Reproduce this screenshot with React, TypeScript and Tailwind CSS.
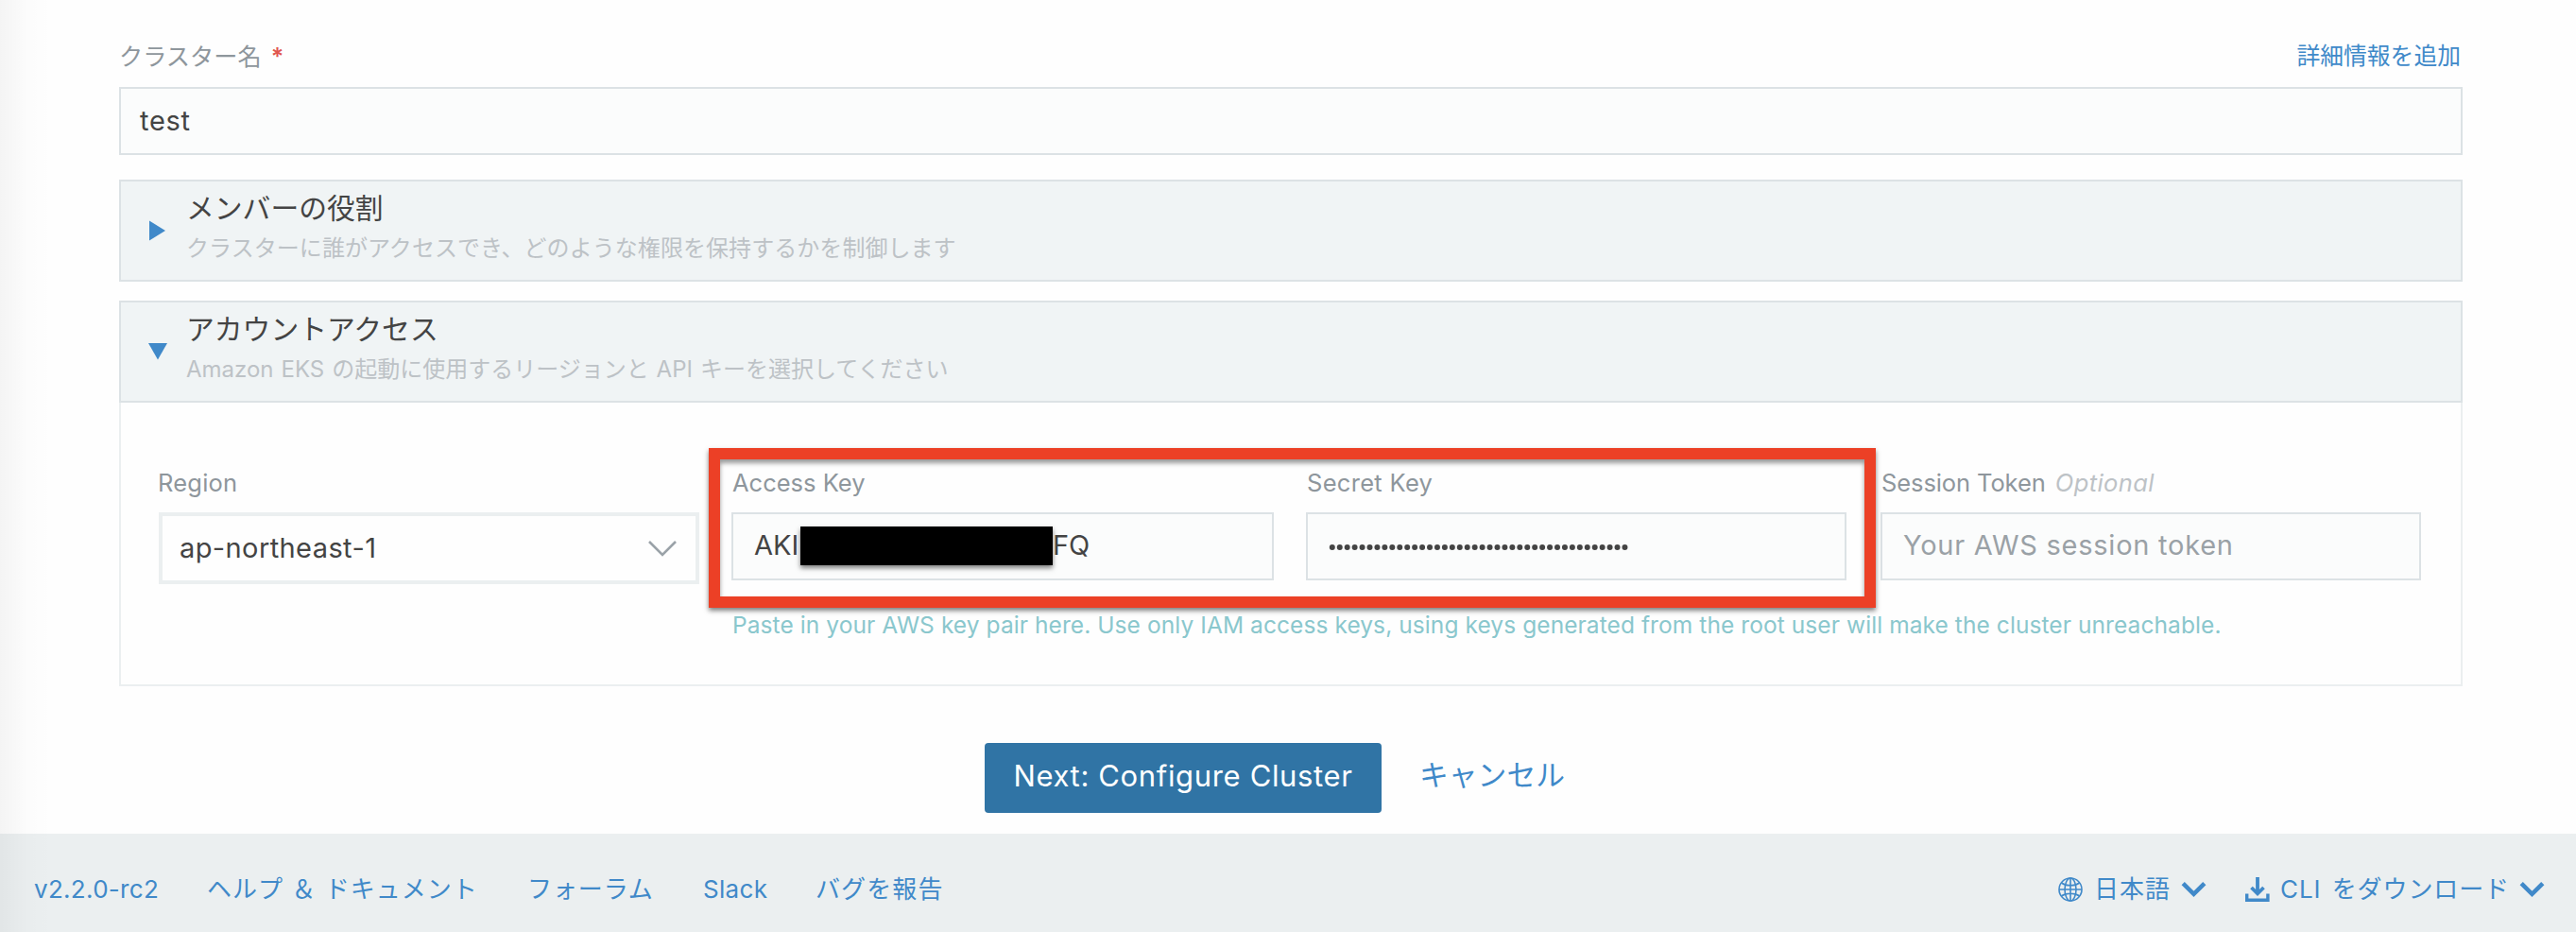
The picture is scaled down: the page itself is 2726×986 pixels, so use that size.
import type { ReactNode } from "react";

function Panel({ open, title, detail, children }: { open?: boolean; title: string; detail: ReactNode; children?: ReactNode }) {
  return (
    <section>
      <header className="flex h-[108px] border-2 border-[#dce2e5] bg-[#f0f4f5] pl-[28px]">
        <div className="w-[41px] shrink-0 pt-[41px]">
          {open ? (
            <svg className="mt-[2px] block h-[18px] w-[22px] fill-[#4089c9]" viewBox="0 0 22 18">
              <path d="M1 0H21L11 17.5Z" />
            </svg>
          ) : (
            <svg className="block h-[22px] w-[22px] fill-[#4089c9]" viewBox="0 0 22 22">
              <path d="M2 0.5V21.5L19 11Z" />
            </svg>
          )}
        </div>
        <div className="pt-[8px]">
          <h2 className="h-[40px] text-[29.8px] leading-[40px] text-[#444444]">{title}</h2>
          <p className="mt-[5px] text-[24px] leading-[36px] text-[#bdc2c6]">{detail}</p>
        </div>
      </header>
      {children}
    </section>
  );
}

function Field({ label, className, children }: { label: ReactNode; className: string; children: ReactNode }) {
  return (
    <div className={className}>
      <label className="block h-[52px] pl-[1px] text-[25.5px] leading-[41px] text-[#8e969c]">{label}</label>
      {children}
    </div>
  );
}

function Chevron() {
  return (
    <svg className="h-[18px] w-[27px]" viewBox="0 0 27 18" fill="none" stroke="#4089c9" strokeWidth="4.6">
      <path d="M2.2 2.7L13.5 13.8L24.8 2.7" />
    </svg>
  );
}

const inputBox = "flex h-[72px] items-center border-2 border-[#dce2e5] bg-[#fbfcfc] pl-[22px] pb-[3px] text-[29px] text-[#444444]";

export default function App() {
  return (
    <div
      lang="ja"
      className="relative flex h-[986px] w-[2726px] flex-col overflow-hidden bg-[#fefefe] font-['Inter','Noto_Sans_CJK_JP',sans-serif] font-normal whitespace-nowrap"
    >
      <main className="h-[882px] pr-[120px] pl-[126px]">
        <div className="flex h-[92px] justify-between pt-[39px] text-[25.2px] leading-[42px]">
          <label className="text-[#8e969c]">
            クラスター名 <span className="ml-[3px] font-semibold text-[#e0564f]">*</span>
          </label>
          <a className="-mt-[1px] mr-[2px] text-[24.8px] text-[#4089c9]">詳細情報を追加</a>
        </div>
        <div className="flex h-[72px] items-center border-2 border-[#dce2e5] bg-[#fbfcfc] pb-[1px] pl-[20px] text-[29px] tracking-[0.7px] text-[#444444]">test</div>

        <div className="mt-[26px]">
          <Panel
            title="メンバーの役割"
            detail={<span className="tracking-[0.06px]">クラスターに誰がアクセスでき、どのような権限を保持するかを制御します</span>}
          />
        </div>

        <div className="mt-[20px]">
          <Panel
            open
            title="アカウントアクセス"
            detail={<span className="[word-spacing:1.2px]">Amazon EKS の起動に使用するリージョンと API キーを選択してください</span>}
          >
            <div className="h-[300px] border-x-2 border-b-2 border-[#ebeff0] pt-[64px] pl-[40px]">
              <div className="flex">
                <Field className="w-[606px]" label={<span className="-ml-[2px] tracking-[0.2px]">Region</span>}>
                  <div className="flex h-[76px] w-[572px] items-center justify-between border-4 border-[#ebeff0] bg-[#fefefe] pr-[18px] pl-[18px] text-[29px] text-[#444444]">
                    <span className="tracking-[0.4px]">ap-northeast-1</span>
                    <svg className="-mt-[1px] h-[20px] w-[34px]" viewBox="0 0 34 20" fill="none" stroke="#9aa2a8" strokeWidth="2.6">
                      <path d="M3 3L17 17L31 3" />
                    </svg>
                  </div>
                </Field>
                <div>
                  <div className="relative flex">
                    <Field className="w-[608px]" label={<span>Access Key</span>}>
                      <div className={`${inputBox} w-[574px]`}>
                        <span className="w-[49px]">AKI</span>
                        <span className="mt-[1px] h-[41px] w-[267px] bg-black shadow-[0_3px_5px_rgba(0,0,0,0.5)]" />
                        <span>FQ</span>
                      </div>
                    </Field>
                    <Field className="w-[608px]" label={<span className="tracking-[0.3px]">Secret Key</span>}>
                      <div className={`${inputBox} w-[572px]`}>
                        <svg className="mt-[4px] h-[8px] w-[320px]" viewBox="0 0 320 8">
                          {Array.from({ length: 40 }, (_, i) => (
                            <circle key={i} cx={3.8 + i * 7.94} cy="4" r="3" fill="#444444" />
                          ))}
                        </svg>
                      </div>
                    </Field>
                    <Field
                      className="w-[572px]"
                      label={
                        <span className="-tracking-[0.1px]">
                          Session Token <i className="ml-[3px] tracking-[0.4px] text-[#bdc2c6]">Optional</i>
                        </span>
                      }
                    >
                      <div className={`${inputBox} w-full`}>
                        <span className="tracking-[0.75px] text-[#9aa1a6]">Your AWS session token</span>
                      </div>
                    </Field>
                    <div className="pointer-events-none absolute -top-[16px] -left-[24px] h-[169px] w-[1235px] border-12 border-[#ec4026] shadow-[0_3px_5px_rgba(0,0,0,0.5),inset_0_4px_5px_rgba(0,0,0,0.4)]" />
                  </div>
                  <p className="mt-[26px] pl-[1px] text-[24.5px] leading-[42px] tracking-[0.08px] text-[#8ac7cd]">
                    Paste in your AWS key pair here. Use only IAM access keys, using keys generated from the root user will make the cluster unreachable.
                  </p>
                </div>
              </div>
            </div>
          </Panel>
        </div>

        <div className="mt-[60px] flex pl-[916px]">
          <button className="h-[74px] w-[420px] rounded-[4px] bg-[#3074a5] pb-[3px] text-[31px] tracking-[0.65px] text-white">Next: Configure Cluster</button>
          <a className="ml-[40px] text-[30.8px] leading-[67px] text-[#4089c9]">キャンセル</a>
        </div>
      </main>

      <footer className="flex h-[104px] items-center bg-[#ebeff0] pl-[36px] pr-[33px] text-[26px] leading-[40px] text-[#4089c9]">
        <div className="flex flex-1 pt-[13px]">
          <a className="w-[183px] tracking-[0.3px]">v2.2.0-rc2</a>
          <a className="w-[339px] tracking-[1px]">ヘルプ ＆ ドキュメント</a>
          <a className="w-[186px] tracking-[0.9px]">フォーラム</a>
          <a className="w-[119px] tracking-[0.3px]">Slack</a>
          <a className="tracking-[1.1px]">バグを報告</a>
        </div>
        <div className="flex items-center pt-[13px]">
          <svg className="h-[26px] w-[26px]" viewBox="0 0 26 26" fill="none" stroke="#4089c9" strokeWidth="1.6">
            <circle cx="13" cy="13" r="12" />
            <ellipse cx="13" cy="13" rx="6" ry="12" />
            <path d="M13 1V25M1 13H25M3.4 6C8.5 9.6 17.5 9.6 22.6 6M3.4 20C8.5 16.4 17.5 16.4 22.6 20" />
          </svg>
          <span className="mr-[11px] ml-[12px] tracking-[1px]">日本語</span>
          <Chevron />
          <svg className="mr-[11px] ml-[41px] h-[26px] w-[26px]" viewBox="0 0 26 26" fill="#4089c9">
            <path d="M11.1 0H14.9V13L18.2 9.7L20.8 12.3L13 20L5.2 12.3L7.8 9.7L11.1 13Z" />
            <path d="M0 17.5H3.4V22.4H22.2V17.5H25.6V26H0Z" />
          </svg>
          <span className="mr-[10px] tracking-[0.9px] [word-spacing:3px]">CLI をダウンロード</span>
          <Chevron />
        </div>
      </footer>
      <div className="pointer-events-none absolute inset-y-0 left-0 w-[56px] bg-linear-to-r from-black/4 via-black/1 to-transparent" />
    </div>
  );
}
